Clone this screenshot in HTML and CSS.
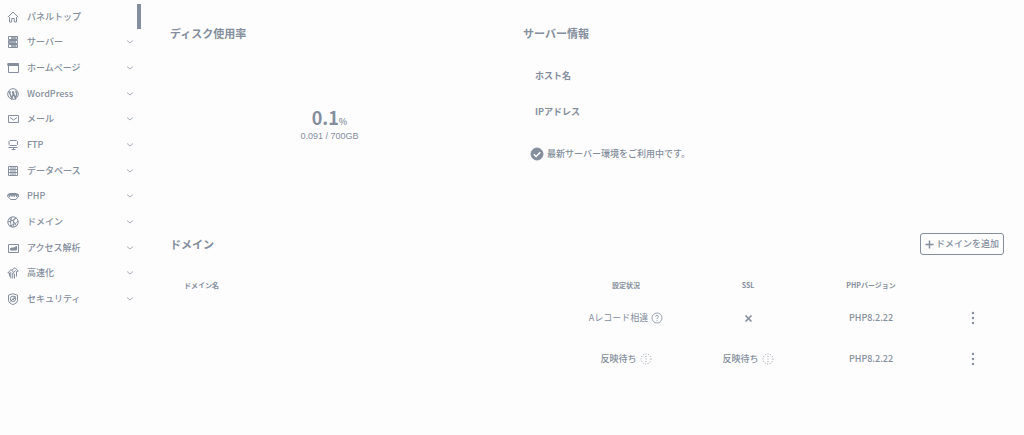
FILE: index.html
```html
<!DOCTYPE html>
<html lang="ja">
<head>
<meta charset="utf-8">
<title>サーバーパネル</title>
<link rel="stylesheet" href="styles.css">
</head>
<body>
<div class="layout">
<aside class="sidebar">
<nav>
<ul class="menu">
<li><a class="item" href="#"><svg class="icon" viewBox="0 0 12 12"><path d="M.8 6.200 6 1l5.200 5.200M2.500 6V11h2.200V7.500h2.600V11h2.200V6"/></svg><span>パネルトップ</span></a></li>
<li><a class="item" href="#"><svg class="icon tall" viewBox="0 0 12 14"><path d="M1.500 1.500h9v3h-9zM1.500 5.500h9v3h-9zM1.500 9.500h9v3h-9z"/><path class="thick" d="M4 3h5.500M2 7h7M4 11h5.500"/></svg><span>サーバー</span><svg class="chev" viewBox="0 0 8 6"><path d="m1 1.500 3 2.500 3-2.500"/></svg></a></li>
<li><a class="item" href="#"><svg class="icon" viewBox="0 0 12 12"><path d="M1.500 2h10v8.500h-10z"/><path class="solid" d="M.8 1.500h10.700v2H.8z"/></svg><span>ホームページ</span><svg class="chev" viewBox="0 0 8 6"><path d="m1 1.500 3 2.500 3-2.500"/></svg></a></li>
<li><a class="item" href="#"><svg class="icon" viewBox="0 0 12 12"><circle cx="6" cy="6" r="5.300"/><path class="thick" d="M1.500 4h2.300M2.300 4l2.500 6.500L6.200 6 5.400 4M5 4h2.200M6 4l2.400 6.300L9.600 6.500C10 5 8.600 4.500 9 2.700"/></svg><span>WordPress</span><svg class="chev" viewBox="0 0 8 6"><path d="m1 1.500 3 2.500 3-2.500"/></svg></a></li>
<li><a class="item" href="#"><svg class="icon" viewBox="0 0 12 12"><path d="M1.500 2.500h10v7h-10zM3 4.500l3.500 2.500L10 4.500"/></svg><span>メール</span><svg class="chev" viewBox="0 0 8 6"><path d="m1 1.500 3 2.500 3-2.500"/></svg></a></li>
<li><a class="item" href="#"><svg class="icon" viewBox="0 0 12 12"><path d="M3 1.500h6.500l1 1v3l-1 1H3l-1-1v-3zM1.500 8.500h9M6.500 8.500v2M4.500 10.500h4"/></svg><span>FTP</span><svg class="chev" viewBox="0 0 8 6"><path d="m1 1.500 3 2.500 3-2.500"/></svg></a></li>
<li><a class="item" href="#"><svg class="icon" viewBox="0 0 12 12"><path d="M1.500 1.500h9v9h-9zM1.500 4.500h9M1.500 7.500h9M3 3h6M3 6h6M3 9h6"/></svg><span>データベース</span><svg class="chev" viewBox="0 0 8 6"><path d="m1 1.500 3 2.500 3-2.500"/></svg></a></li>
<li><a class="item" href="#"><svg class="icon" viewBox="0 0 12 12"><path d="M3 3.500h6.500l2 1.200v2L10 8 9 9.500H3.500L2.500 8 .7 6.700v-2z"/><path class="thick" d="M1 4.700h10.300M2.500 5v2M5 5v1.800M7.200 5v1.800M9.700 5v2"/></svg><span>PHP</span><svg class="chev" viewBox="0 0 8 6"><path d="m1 1.500 3 2.500 3-2.500"/></svg></a></li>
<li><a class="item" href="#"><svg class="icon" viewBox="0 0 12 12"><circle cx="6" cy="6" r="5.200"/><path d="M2 2.500c3 1 6 4 7.500 7.500M1 6c4-1 7-3 8.500-4M2.500 10c4-1 7-3 8.500-5M5 1C3 4 3 8 5 11M8.500 1.500C6 4 6 8 7 11"/></svg><span>ドメイン</span><svg class="chev" viewBox="0 0 8 6"><path d="m1 1.500 3 2.500 3-2.500"/></svg></a></li>
<li><a class="item" href="#"><svg class="icon" viewBox="0 0 12 12"><path d="M1.500 2.500h10v8h-10z"/><path class="solid" d="M3.500 8V6.500L5 5.800l1 .7L7.500 5l.5.500L9.500 4v4z"/></svg><span>アクセス解析</span><svg class="chev" viewBox="0 0 8 6"><path d="m1 1.500 3 2.500 3-2.500"/></svg></a></li>
<li><a class="item" href="#"><svg class="icon" viewBox="0 0 12 12"><path d="M.8 6 4 2.500 7.200 6H5.700v5.500M.8 6h1.700v3.500M5 2.800 8 .7l3.300 3.500-1.800.3v5M7.500 11.500V7M3.800 5v6.500M8.500 3.200 7.300 5"/></svg><span>高速化</span><svg class="chev" viewBox="0 0 8 6"><path d="m1 1.500 3 2.500 3-2.500"/></svg></a></li>
<li><a class="item" href="#"><svg class="icon" viewBox="0 0 12 12"><path d="m6 .7 4.500 1.500v5C10.500 9.500 8 11 6 11.500 4 11 1.500 9.500 1.500 7.200v-5z"/><circle cx="6" cy="5.800" r="2.700"/><path d="m3.500 8.500 5-5.500M5 6l1 1 2-2"/></svg><span>セキュリティ</span><svg class="chev" viewBox="0 0 8 6"><path d="m1 1.500 3 2.500 3-2.500"/></svg></a></li>
</ul>
</nav>
<div class="thumb"></div>
</aside>
<main class="main">
<div class="summary">
<section>
<h2 class="title">ディスク使用率</h2>
<div class="usage">
<p class="percent">0.1<small class="unit">%</small></p>
<p class="amount">0.091 / 700GB</p>
</div>
</section>
<section>
<h2 class="title">サーバー情報</h2>
<dl class="info">
<dt>ホスト名</dt>
<dt>IPアドレス</dt>
</dl>
<p class="notice"><svg class="check" viewBox="0 0 14 14"><circle class="solid" cx="7" cy="7" r="6"/><path d="m3.800 7.200 2.300 2.300 4.200-4.300"/></svg>最新サーバー環境をご利用中です。</p>
</section>
</div>
<section>
<div class="bar">
<h2 class="title">ドメイン</h2>
<button class="add" type="button"><svg class="plus" viewBox="0 0 9 9"><path d="M4.500 .5v8M.5 4.500h8"/></svg>ドメインを追加</button>
</div>
<table class="domains">
<colgroup><col><col class="c-status"><col class="c-ssl"><col class="c-php"><col class="c-menu"></colgroup>
<thead>
<tr><th class="name" scope="col">ドメイン名</th><th scope="col">設定状況</th><th scope="col">SSL</th><th scope="col">PHPバージョン</th><td></td></tr>
</thead>
<tbody>
<tr>
<td></td>
<td><span class="state light">Aレコード相違<svg class="help" viewBox="0 0 12 12"><circle cx="6" cy="6" r="5"/><path d="M4.500 4.700C4.500 3 7.500 3 7.500 4.700 7.500 5.700 6 5.600 6 7M6 8.200v.8"/></svg></span></td>
<td><svg class="cross" viewBox="0 0 9 9"><path d="m1.500 1.500 6 6M7.500 1.500l-6 6"/></svg></td>
<td>PHP8.2.22</td>
<td><button class="more" type="button" aria-label="メニュー"><svg class="dots" viewBox="0 0 4 14"><circle cx="2" cy="2" r="1.200"/><circle cx="2" cy="7" r="1.200"/><circle cx="2" cy="12" r="1.200"/></svg></button></td>
</tr>
<tr>
<td></td>
<td><span class="state">反映待ち<svg class="help wait" viewBox="0 0 12 12"><circle cx="6" cy="6" r="5"/><path d="M6 3v3.500M6 8v1"/></svg></span></td>
<td><span class="state">反映待ち<svg class="help wait" viewBox="0 0 12 12"><circle cx="6" cy="6" r="5"/><path d="M6 3v3.500M6 8v1"/></svg></span></td>
<td>PHP8.2.22</td>
<td><button class="more" type="button" aria-label="メニュー"><svg class="dots" viewBox="0 0 4 14"><circle cx="2" cy="2" r="1.200"/><circle cx="2" cy="7" r="1.200"/><circle cx="2" cy="12" r="1.200"/></svg></button></td>
</tr>
</tbody>
</table>
</section>
</main>
</div>
</body>
</html>
```

FILE: styles.css
```css
* { box-sizing: border-box; }
body {
  margin: 0;
  background: #fdfdfd;
  color: #848e9c;
  font: 500 9px/14px "Noto Sans CJK JP", sans-serif;
}
h2, p, dl, ul { margin: 0; padding: 0; }
svg { flex: none; fill: none; stroke: currentColor; }
.solid { fill: currentColor; }
.thick { stroke-width: 1.4; }

.layout { display: flex; }
.sidebar { position: relative; flex: none; width: 141px; padding-top: 4px; }
.menu { display: grid; grid-auto-rows: 1fr; min-height: 308px; list-style: none; }
.menu li { display: flex; }
.item {
  display: flex;
  flex: 1;
  align-items: center;
  gap: 8px;
  padding: 0 7px;
  color: inherit;
  text-decoration: none;
}
.icon { width: 12px; height: 12px; }
.tall { height: 14px; }
.chev { width: 8px; height: 6px; margin-left: auto; stroke-width: 0.7; }
.thumb {
  position: absolute;
  top: 4px;
  right: 0;
  width: 4px;
  height: 25px;
  background: #848e9c;
}

.main { flex: 1; min-width: 0; padding: 25px 20px 25px 29px; }
.summary { display: grid; grid-template-columns: 353px 1fr; min-height: 208px; }
.title { font-size: 11px; line-height: 16px; font-weight: 700; }
.usage { padding: 64px 34px 0 0; text-align: center; }
.percent { font-size: 18px; line-height: 24px; font-weight: 700; }
.unit { font-size: 9px; line-height: 9px; font-weight: 500; }
.amount { font-family: "Liberation Sans", sans-serif; }
.info { display: grid; gap: 22px; padding: 28px 12px 0; font-weight: 700; }
.notice { display: flex; align-items: center; gap: 3px; padding: 28px 7px 0; }
.check { width: 14px; height: 14px; }
.check path { stroke: #fdfdfd; stroke-width: 1.5; }

.bar { display: flex; align-items: center; justify-content: space-between; }
.add {
  display: flex;
  align-items: center;
  gap: 2px;
  padding: 3px 4px;
  border: 1px solid #848e9c;
  border-radius: 3px;
  background: none;
  color: inherit;
  font: inherit;
  line-height: 14px;
}
.plus { width: 9px; height: 9px; stroke-width: 1.5; }
.domains {
  width: 100%;
  margin-top: 18px;
  border-collapse: collapse;
  table-layout: fixed;
  text-align: center;
}
.c-status { width: 140px; }
.c-ssl { width: 104px; }
.c-php { width: 142px; }
.c-menu { width: 62px; }
.domains th, .domains td { padding: 0; }
.domains th { height: 24px; font-size: 7px; font-weight: 700; }
.domains .name { padding-left: 14px; text-align: left; }
.domains tbody td { height: 41px; }
.state { display: flex; align-items: center; justify-content: center; gap: 3px; }
.light { font-weight: 400; }
.help { width: 12px; height: 12px; stroke-width: 0.8; }
.wait { stroke-dasharray: 1 1.5; }
.cross { width: 9px; height: 9px; stroke-width: 1.6; vertical-align: middle; }
.more { padding: 0 4px; border: 0; background: none; color: inherit; vertical-align: middle; }
.dots { display: block; width: 4px; height: 14px; fill: currentColor; stroke: none; }
```
